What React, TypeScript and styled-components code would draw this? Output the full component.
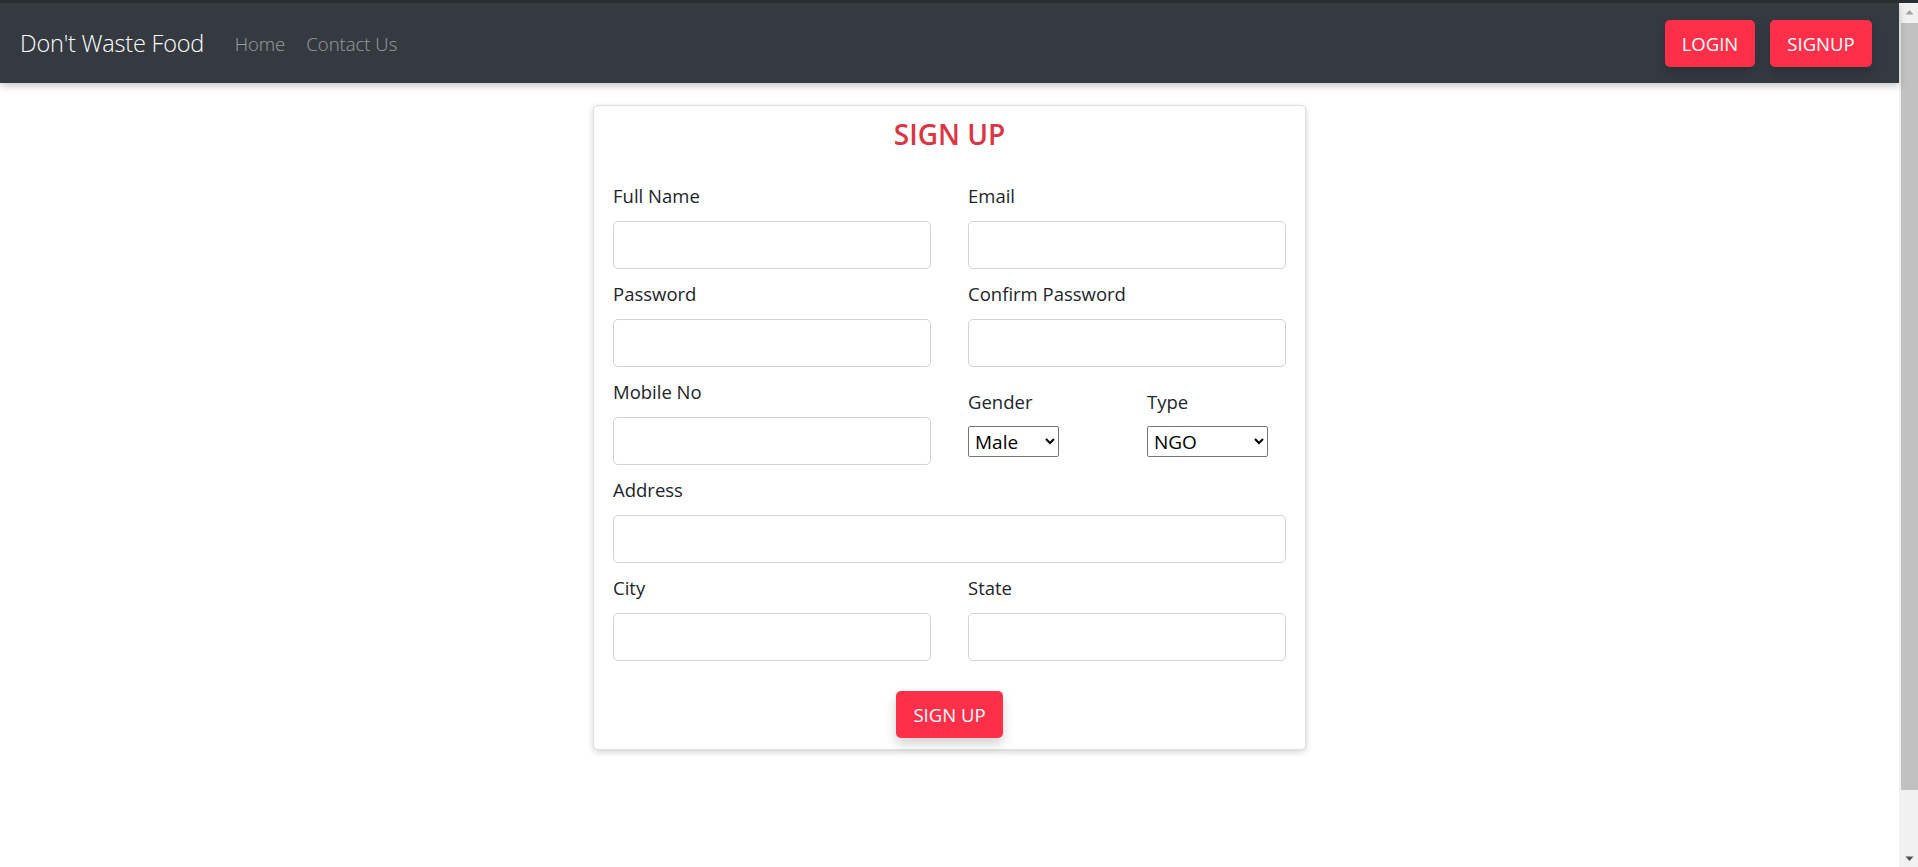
import React from "react";
import styled, { createGlobalStyle } from "styled-components";

const GlobalStyle = createGlobalStyle`
  html, body { margin: 0; padding: 0; height: 100%; overflow: hidden; }
  body {
    background: #ffffff;
    font-family: "Open Sans", "Noto Sans", "Liberation Sans", sans-serif;
    color: #212529;
  }
  * { box-sizing: border-box; }
`;

const Frame = styled.div`
  display: flex;
  flex-direction: column;
  height: 867px;
`;

const TopStrip = styled.div`
  height: 3px;
  background: #2b2e33;
  flex-shrink: 0;
`;

const Body = styled.div`
  display: flex;
  flex: 1;
  min-height: 0;
`;

const Main = styled.div`
  flex: 1;
  display: flex;
  flex-direction: column;
  min-width: 0;
`;

const Navbar = styled.nav`
  height: 80px;
  background: #343a40;
  display: flex;
  align-items: center;
  padding: 0 27px 0 20px;
  box-shadow: 0 3px 7px rgba(0, 0, 0, 0.22);
  position: relative;
  z-index: 1;
`;

const Brand = styled.a`
  color: #ffffff;
  font-size: 23.5px;
  font-weight: 300;
  margin-right: 20px;
  text-decoration: none;
  letter-spacing: -0.2px;
`;

const NavLink = styled.a`
  color: rgba(255, 255, 255, 0.5);
  font-size: 18.5px;
  font-weight: 300;
  padding: 0 10.5px;
  text-decoration: none;
`;

const Spacer = styled.div`
  flex: 1;
`;

const NavButtons = styled.div`
  display: flex;
  gap: 15px;
`;

const RedButton = styled.button<{ $w: number }>`
  width: ${(p) => p.$w}px;
  height: 47px;
  background: #fe3049;
  color: #ffffff;
  border: none;
  border-radius: 5px;
  font-family: inherit;
  font-size: 18.5px;
  font-weight: 400;
  padding: 0;
  box-shadow: 0 6px 12px rgba(0, 0, 0, 0.18);
  cursor: pointer;
`;

const Content = styled.div`
  display: flex;
  justify-content: center;
  padding-top: 22px;
`;

const Card = styled.div`
  width: 713px;
  background: #ffffff;
  border: 1px solid rgba(0, 0, 0, 0.125);
  border-radius: 5px;
  box-shadow: 0 2px 6px rgba(0, 0, 0, 0.18);
  padding: 9px 19px 11px;
`;

const Title = styled.h2`
  margin: 0 0 27px;
  height: 39px;
  line-height: 39px;
  text-align: center;
  color: #dc3545;
  font-size: 28px;
  font-weight: 600;
`;

const FieldGrid = styled.div`
  display: grid;
  grid-template-columns: 318px 318px;
  column-gap: 37px;
  row-gap: 10.5px;
`;

const Field = styled.div<{ $span?: boolean }>`
  display: flex;
  flex-direction: column;
  grid-column: ${(p) => (p.$span ? "1 / span 2" : "auto")};
`;

const Label = styled.label`
  height: 30px;
  line-height: 30px;
  font-size: 18.5px;
  margin-bottom: 10px;
  color: #212529;
`;

const Input = styled.input`
  height: 47.5px;
  width: 100%;
  border: 1px solid #ced4da;
  border-radius: 5px;
  background: #ffffff;
  font-family: inherit;
  font-size: 18.5px;
  padding: 0 15px;
  outline: none;
`;

const SubGrid = styled.div`
  display: grid;
  grid-template-columns: 139px 139px;
  column-gap: 40px;
  margin-top: 10px;
`;

const SelectLabel = styled(Label)`
  margin-bottom: 9px;
`;

const Select = styled.select<{ $w: number }>`
  width: ${(p) => p.$w}px;
  height: 31px;
  border: 1px solid #767676;
  border-radius: 2px;
  background: #ffffff;
  color: #000000;
  font-family: inherit;
  font-size: 19px;
  padding: 0 2px;
`;

const SubmitRow = styled.div`
  display: flex;
  justify-content: center;
  margin-top: 30.5px;
`;

const Scrollbar = styled.div`
  width: 19px;
  flex-shrink: 0;
  background: #f1f1f1;
  display: flex;
  flex-direction: column;
  align-items: flex-end;
`;

const ArrowBox = styled.div`
  height: 17px;
  width: 17px;
  display: flex;
  align-items: center;
  justify-content: center;
  flex-shrink: 0;
`;

const Thumb = styled.div`
  width: 17px;
  height: 767px;
  margin-top: 3px;
  background: #c1c1c1;
`;

const Fill = styled.div`
  flex: 1;
`;

function Arrow({ up, color }: { up?: boolean; color: string }) {
  return (
    <svg width="9" height="6" viewBox="0 0 9 6">
      {up ? (
        <polygon points="0.5,5.5 8.5,5.5 4.5,1" fill={color} />
      ) : (
        <polygon points="0.5,0.5 8.5,0.5 4.5,5" fill={color} />
      )}
    </svg>
  );
}

export default function App() {
  return (
    <>
      <GlobalStyle />
      <Frame>
        <TopStrip />
        <Body>
          <Main>
            <Navbar>
              <Brand href="#">Don't Waste Food</Brand>
              <NavLink href="#">Home</NavLink>
              <NavLink href="#">Contact Us</NavLink>
              <Spacer />
              <NavButtons>
                <RedButton $w={90}>LOGIN</RedButton>
                <RedButton $w={102}>SIGNUP</RedButton>
              </NavButtons>
            </Navbar>
            <Content>
              <Card>
                <Title>SIGN UP</Title>
                <FieldGrid>
                  <Field>
                    <Label>Full Name</Label>
                    <Input type="text" />
                  </Field>
                  <Field>
                    <Label>Email</Label>
                    <Input type="email" />
                  </Field>
                  <Field>
                    <Label>Password</Label>
                    <Input type="password" />
                  </Field>
                  <Field>
                    <Label>Confirm Password</Label>
                    <Input type="password" />
                  </Field>
                  <Field>
                    <Label>Mobile No</Label>
                    <Input type="tel" />
                  </Field>
                  <SubGrid>
                    <Field>
                      <SelectLabel>Gender</SelectLabel>
                      <Select $w={91} defaultValue="Male">
                        <option>Male</option>
                        <option>Female</option>
                      </Select>
                    </Field>
                    <Field>
                      <SelectLabel>Type</SelectLabel>
                      <Select $w={121} defaultValue="NGO">
                        <option>NGO</option>
                        <option>Restaurant</option>
                      </Select>
                    </Field>
                  </SubGrid>
                  <Field $span>
                    <Label>Address</Label>
                    <Input type="text" />
                  </Field>
                  <Field>
                    <Label>City</Label>
                    <Input type="text" />
                  </Field>
                  <Field>
                    <Label>State</Label>
                    <Input type="text" />
                  </Field>
                </FieldGrid>
                <SubmitRow>
                  <RedButton $w={107}>SIGN UP</RedButton>
                </SubmitRow>
              </Card>
            </Content>
          </Main>
          <Scrollbar>
            <ArrowBox>
              <Arrow up color="#a3a3a3" />
            </ArrowBox>
            <Thumb />
            <Fill />
            <ArrowBox>
              <Arrow color="#505050" />
            </ArrowBox>
          </Scrollbar>
        </Body>
      </Frame>
    </>
  );
}
